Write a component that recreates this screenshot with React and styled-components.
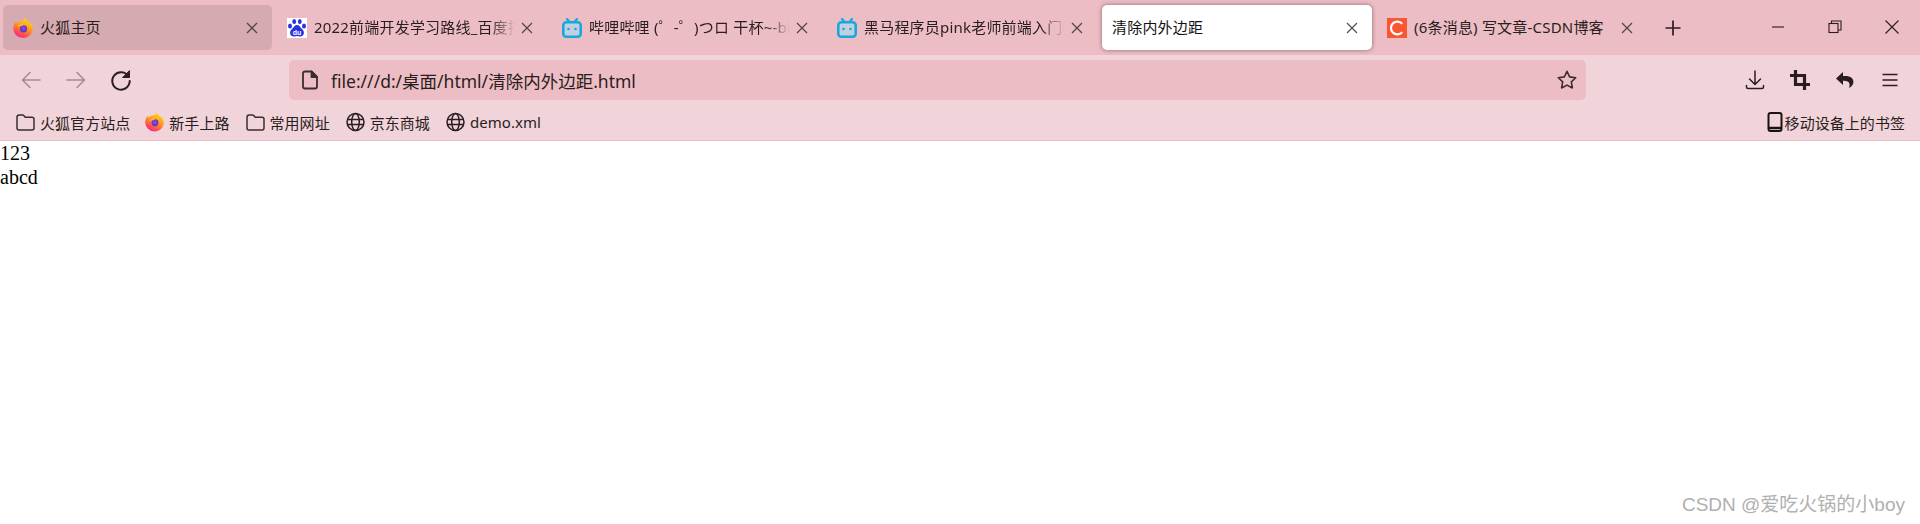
import React from 'react';
import styled, { createGlobalStyle } from 'styled-components';

const UI_FONT = `'Noto Sans', 'Noto Sans CJK SC', sans-serif`;

const GlobalStyle = createGlobalStyle`
  html, body {
    margin: 0;
    padding: 0;
    background: #fff;
  }
  body {
    width: 1920px;
    height: 524px;
    overflow: hidden;
  }
`;

const Browser = styled.div`
  position: relative;
  width: 1920px;
  height: 524px;
  overflow: hidden;
  background: #fff;
  font-family: ${UI_FONT};
  color: #2a1d20;
`;

// Barra de pestañas
const TabBar = styled.div`
  display: flex;
  align-items: center;
  gap: 5px;
  height: 55px;
  padding-left: 3px;
  background: #ecbdc5;
`;

const Tab = styled.div`
  display: flex;
  align-items: center;
  flex: none;
  box-sizing: border-box;
  width: ${(p) => (p.$first ? 269 : 270)}px;
  height: 45px;
  padding: 0 11px 0 10px;
  border-radius: 5px;
  background: ${(p) => (p.$state === 'active' ? '#fff' : p.$state === 'hover' ? '#d5aab1' : 'transparent')};
  box-shadow: ${(p) => (p.$state === 'active' ? '0 0 4px rgba(70, 30, 40, 0.55)' : 'none')};
`;

const TabIcon = styled.span`
  display: flex;
  flex: none;
  width: 20px;
  height: 20px;
  margin-right: 7px;
`;

const TabTitle = styled.span`
  flex: 1;
  min-width: 0;
  overflow: hidden;
  white-space: nowrap;
  font-size: 15px;
  letter-spacing: 0.2px;
  line-height: 20px;
  margin-bottom: 1px;
  color: ${(p) => (p.$active ? '#111' : '#2a1d20')};
  ${(p) =>
    p.$fade &&
    `-webkit-mask-image: linear-gradient(to right, #000 calc(100% - 24px), transparent);
     mask-image: linear-gradient(to right, #000 calc(100% - 24px), transparent);`}
`;

const TabClose = styled.span`
  display: flex;
  flex: none;
  width: 18px;
  height: 18px;
  margin-left: 3px;
  color: ${(p) => (p.$active ? '#5a5055' : '#54454a')};
`;

const NewTab = styled.span`
  display: flex;
  flex: none;
  margin-left: 5px;
  width: 32px;
  height: 32px;
  align-items: center;
  justify-content: center;
  color: #2a1d20;
`;

const WindowControls = styled.div`
  display: flex;
  margin-left: auto;
  height: 100%;
`;

const WindowButton = styled.span`
  display: flex;
  align-items: center;
  justify-content: center;
  width: 57px;
  height: 54px;
  color: #2a1d20;
`;

// Barra de navegación
const Toolbar = styled.div`
  display: flex;
  align-items: center;
  box-sizing: border-box;
  height: 45px;
  background: #f1d4da;
  padding: 5px 0 0 8px;
`;

const NavButton = styled.span`
  display: flex;
  align-items: center;
  justify-content: center;
  flex: none;
  width: 45px;
  height: 40px;
  color: ${(p) => (p.$disabled ? '#a28a90' : '#2a1d20')};
`;

const UrlBar = styled.div`
  display: flex;
  align-items: center;
  flex: none;
  box-sizing: border-box;
  width: 1297px;
  height: 40px;
  margin-left: 146px;
  padding: 0 8px 0 12px;
  border-radius: 5px;
  background: #edbdc5;
`;

const UrlIcon = styled.span`
  display: flex;
  flex: none;
  width: 18px;
  height: 20px;
  margin-right: 12px;
  color: #3a2c30;
`;

const UrlText = styled.span`
  flex: 1;
  font-size: 17.5px;
  color: #2a1d20;
  white-space: nowrap;
`;

const StarIcon = styled.span`
  display: flex;
  flex: none;
  width: 22px;
  height: 22px;
  color: #3a2c30;
`;

const ToolGroup = styled.div`
  display: flex;
  margin-left: 146px;
`;

// Barra de marcadores
const BookmarkBar = styled.div`
  display: flex;
  align-items: center;
  box-sizing: content-box;
  height: 36px;
  padding: 4px 15px 0 16px;
  background: #f1d4da;
  border-bottom: 1px solid #eebcc5;
`;

const Bookmark = styled.span`
  display: flex;
  align-items: center;
  flex: none;
  gap: 5px;
  margin-right: ${(p) => p.$gap ?? 10}px;
  font-size: 15px;
  letter-spacing: 0.05px;
  color: #2a1d20;
  white-space: nowrap;
`;

const BookmarkIcon = styled.span`
  display: flex;
  flex: none;
  width: 19px;
  height: 20px;
`;

const MobileBookmarks = styled(Bookmark)`
  margin-left: auto;
  margin-right: 0;
  gap: 2px;
`;

// Contenido de la página
const Page = styled.div`
  font-family: 'Liberation Serif', 'Times New Roman', serif;
  font-size: 20px;
  line-height: 24px;
  color: #000;
`;

const Watermark = styled.span`
  position: absolute;
  right: 15px;
  bottom: 7px;
  font-family: 'Liberation Sans', 'Noto Sans CJK SC', sans-serif;
  font-size: 19px;
  line-height: 24px;
  color: #b0b0b0;
  white-space: nowrap;
`;

const Line = ({ size = 24, children, sw = 1.5, fill = 'none' }) => (
  <svg width={size} height={size} viewBox="0 0 24 24" fill={fill} stroke="currentColor" strokeWidth={sw} strokeLinecap="round" strokeLinejoin="round">
    {children}
  </svg>
);

const CloseIcon = () => (
  <svg width="18" height="18" viewBox="0 0 18 18" stroke="currentColor" strokeWidth="1.3" fill="none">
    <path d="M4 4l10 10M14 4L4 14" />
  </svg>
);

const FirefoxIcon = ({ id }) => (
  <svg width="20" height="20" viewBox="0 0 20 20">
    <defs>
      <linearGradient id={`${id}a`} x1="0.8" y1="0" x2="0.3" y2="1">
        <stop offset="0" stopColor="#ffe226" />
        <stop offset="0.45" stopColor="#ff9a1a" />
        <stop offset="0.8" stopColor="#ff4a55" />
        <stop offset="1" stopColor="#f5229a" />
      </linearGradient>
      <radialGradient id={`${id}b`} cx="0.5" cy="0.45" r="0.55">
        <stop offset="0" stopColor="#8f50e6" />
        <stop offset="1" stopColor="#5230c8" />
      </radialGradient>
    </defs>
    <path d="M10 20A9.800 9.800 0 0 1 .2 10.300C.2 7.500 1.500 5 3.200 3.500c0 1 .2 1.600.7 2.100C5 3.900 6.900 3 8.800 2.900 10.200 2.700 11.300 1.600 12.100 0c.9 1.500 2 2.500 3.600 3.700 2.900 2 4.100 4.300 4.100 6.900C19.800 16 15.400 20 10 20z" fill={`url(#${id}a)`} />
    <circle cx="10.500" cy="10.800" r="3.600" fill={`url(#${id}b)`} />
    <path d="M4 8.800c2.400-3.200 5.800-3.900 8.600-2.500-1.600.1-2.600.8-3 1.800-2-.1-3.900.1-5.600.7z" fill="#ffb02e" />
  </svg>
);

const BaiduIcon = () => (
  <svg width="20" height="20" viewBox="0 0 20 20">
    <rect width="20" height="20" fill="#fff" />
    <g fill="#2932e1">
      <ellipse cx="7.200" cy="3.500" rx="1.900" ry="2.500" />
      <ellipse cx="12.800" cy="3.500" rx="1.900" ry="2.500" />
      <ellipse cx="3" cy="8" rx="2" ry="2.500" />
      <ellipse cx="17" cy="8" rx="2" ry="2.500" />
      <path d="M10 7c-2 0-3 1.800-4 3-1.400 1.400-3.200 2.800-2.900 5.300.3 2.100 2 3.200 3.900 3.200 1.200 0 2-.4 3-.4s1.800.4 3 .4c1.900 0 3.600-1.100 3.900-3.200.3-2.500-1.500-3.900-2.900-5.300-1-1.200-2-3-4-3z" />
    </g>
    <text x="10" y="16.500" textAnchor="middle" fontFamily="'Liberation Sans', sans-serif" fontSize="7" fontWeight="700" fill="#fff">du</text>
  </svg>
);

const BiliIcon = () => (
  <svg width="20" height="20" viewBox="0 0 20 20">
    <path d="M5 1l3 3.200M15 1l-3 3.200" stroke="#17a9dc" strokeWidth="2.200" strokeLinecap="round" />
    <rect x="1.300" y="4.300" width="17.400" height="14.400" rx="3" fill="#c3cfe0" stroke="#17a9dc" strokeWidth="2.600" />
    <circle cx="6.500" cy="11" r="1.300" fill="#17a9dc" />
    <circle cx="13.500" cy="11" r="1.300" fill="#17a9dc" />
  </svg>
);

const CsdnIcon = () => (
  <svg width="20" height="20" viewBox="0 0 20 20">
    <rect width="20" height="20" fill="#fc5531" />
    <path d="M15.200 5.800A6.400 6.400 0 1 0 15.200 14.200" fill="none" stroke="#fff" strokeWidth="2.200" />
  </svg>
);

const FolderIcon = () => (
  <svg width="19" height="20" viewBox="0 0 19 20" fill="none" stroke="#3a2c30" strokeWidth="1.500" strokeLinejoin="round">
    <path d="M1 5.500C1 4 2 3 3.200 3h3.300c.8 0 1.200.4 1.700 1l1 1.200H16c1.200 0 2 .8 2 2V16c0 1.200-.8 2-2 2H3c-1.200 0-2-.8-2-2z" />
  </svg>
);

const GlobeIcon = () => (
  <svg width="19" height="20" viewBox="0 0 19 20" fill="none" stroke="#2a1d20" strokeWidth="1.500">
    <circle cx="9.500" cy="10" r="8.500" />
    <ellipse cx="9.500" cy="10" rx="3.800" ry="8.500" />
    <path d="M1.500 7.500h16M1.500 12.500h16" />
  </svg>
);

const tabs = [
  { title: '火狐主页', icon: <FirefoxIcon id="tabfx" />, state: 'hover', first: true },
  { title: '2022前端开发学习路线_百度搜索', icon: <BaiduIcon />, fade: true },
  { title: '哔哩哔哩 (゜-゜)つロ 干杯~-bilibili', icon: <BiliIcon />, fade: true },
  { title: '黑马程序员pink老师前端入门教程', icon: <BiliIcon />, fade: true },
  { title: '清除内外边距', state: 'active' },
  { title: '(6条消息) 写文章-CSDN博客', icon: <CsdnIcon /> },
];

const App = () => (
  <>
    <GlobalStyle />
    <Browser>
      <TabBar>
        {tabs.map((t) => (
          <Tab key={t.title} $state={t.state} $first={t.first}>
            {t.icon && <TabIcon>{t.icon}</TabIcon>}
            <TabTitle $fade={t.fade} $active={t.state === 'active'}>{t.title}</TabTitle>
            <TabClose $active={t.state === 'active'}><CloseIcon /></TabClose>
          </Tab>
        ))}
        <NewTab>
          <svg width="18" height="18" viewBox="0 0 18 18" stroke="currentColor" strokeWidth="1.700" fill="none">
            <path d="M9 1.500v15M1.500 9h15" />
          </svg>
        </NewTab>
        <WindowControls>
          <WindowButton>
            <svg width="14" height="14" viewBox="0 0 14 14" stroke="currentColor" strokeWidth="1.100"><path d="M1 7h12" /></svg>
          </WindowButton>
          <WindowButton>
            <svg width="14" height="14" viewBox="0 0 14 14" stroke="currentColor" strokeWidth="1.100" fill="none">
              <rect x="1" y="3.500" width="9" height="9" />
              <path d="M3.500 3.500V1h9.500v9h-3" />
            </svg>
          </WindowButton>
          <WindowButton>
            <svg width="14" height="14" viewBox="0 0 14 14" stroke="currentColor" strokeWidth="1.100"><path d="M.5.500l13 13M13.500.500l-13 13" /></svg>
          </WindowButton>
        </WindowControls>
      </TabBar>

      <Toolbar>
        <NavButton $disabled>
          <Line><path d="M21 12H4M11 4.500L3.500 12l7.500 7.500" /></Line>
        </NavButton>
        <NavButton $disabled>
          <Line><path d="M3 12h17M13 4.500l7.500 7.500-7.500 7.500" /></Line>
        </NavButton>
        <NavButton>
          <Line sw={2}>
            <path d="M19.500 8.500A8.700 8.700 0 1 0 20.700 13" />
            <path d="M20.500 3v6.500H14z" fill="currentColor" strokeWidth="1" />
          </Line>
        </NavButton>
        <UrlBar>
          <UrlIcon>
            <svg width="18" height="20" viewBox="0 0 18 20" fill="none" stroke="currentColor" strokeWidth="1.800" strokeLinejoin="round">
              <path d="M2 3.500C2 2.200 2.800 1.500 4 1.500h6.500L16 7v9.500c0 1.200-.8 2-2 2H4c-1.200 0-2-.8-2-2z" />
              <path d="M10.500 1.500V7H16z" fill="currentColor" />
            </svg>
          </UrlIcon>
          <UrlText>file:///d:/桌面/html/清除内外边距.html</UrlText>
          <StarIcon>
            <Line size={22} sw={1.700}>
              <path d="M12 2.500l2.900 6.100 6.600.9-4.800 4.600 1.200 6.600L12 17.600l-5.900 3.100 1.200-6.600-4.800-4.600 6.600-.9z" />
            </Line>
          </StarIcon>
        </UrlBar>
        <ToolGroup>
          <NavButton>
            <Line><path d="M12 3v13M6.500 11l5.500 5.500 5.500-5.500M3.500 17.500v1.500c0 1 .7 1.500 1.500 1.500h14c.8 0 1.500-.5 1.500-1.500v-1.500" /></Line>
          </NavButton>
          <NavButton>
            <svg width="20" height="20" viewBox="0 0 20 20" fill="none" stroke="currentColor" strokeWidth="3.200">
              <path d="M5.500 0v14.500H20M0 5.500h14.500V20" />
            </svg>
          </NavButton>
          <NavButton>
            <svg width="20" height="20" viewBox="0 0 20 20" fill="currentColor">
              <path d="M8 2L1 8.500 8 15v-4.200c3.500-.2 5.800.6 6.400 2.800.3 1.200.2 2.900-.4 4.400 3-1.400 4.800-4 4.400-7C18 7.500 14 5.500 8 6z" />
            </svg>
          </NavButton>
          <NavButton>
            <svg width="18" height="18" viewBox="0 0 18 18" stroke="currentColor" strokeWidth="1.500"><path d="M1.500 3.500h15M1.500 9h15M1.500 14.500h15" /></svg>
          </NavButton>
        </ToolGroup>
      </Toolbar>

      <BookmarkBar>
        <Bookmark $gap={15}><BookmarkIcon><FolderIcon /></BookmarkIcon>火狐官方站点</Bookmark>
        <Bookmark $gap={16}><BookmarkIcon><FirefoxIcon id="bmfx" /></BookmarkIcon>新手上路</Bookmark>
        <Bookmark $gap={16}><BookmarkIcon><FolderIcon /></BookmarkIcon>常用网址</Bookmark>
        <Bookmark $gap={16}><BookmarkIcon><GlobeIcon /></BookmarkIcon>京东商城</Bookmark>
        <Bookmark><BookmarkIcon><GlobeIcon /></BookmarkIcon>demo.xml</Bookmark>
        <MobileBookmarks>
          <svg width="16" height="20" viewBox="0 0 16 20" fill="none" stroke="#1c1114" strokeWidth="2">
            <rect x="1.500" y="1" width="13" height="18" rx="2" />
            <path d="M1.500 16h13" strokeWidth="2.500" />
          </svg>
          移动设备上的书签
        </MobileBookmarks>
      </BookmarkBar>

      <Page>
        <div>123</div>
        <div>abcd</div>
      </Page>
      <Watermark>CSDN @爱吃火锅的小boy</Watermark>
    </Browser>
  </>
);

export default App;
